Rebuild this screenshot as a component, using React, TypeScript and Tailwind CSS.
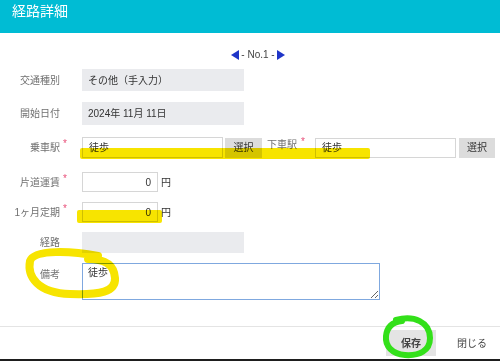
import React from "react";

const Req = () => (
  <span className="absolute -right-[7px] -top-[6px] text-[10px] text-[#e8507a]">*</span>
);

const Label = ({ text, req }: { text: string; req?: boolean }) => (
  <div className="w-[60px] shrink-0 text-right text-[10px] text-[#707070]">
    <span className="relative">
      {text}
      {req && <Req />}
    </span>
  </div>
);

const Marks = () => (
  <svg
    className="pointer-events-none absolute left-0 top-0"
    width="500"
    height="361"
    viewBox="0 0 500 361"
  >
    <g className="mix-blend-multiply">
      <rect x="80" y="148" width="290" height="11" rx="2" fill="#f7e400" />
      <rect x="77" y="210" width="85" height="13" rx="2" fill="#f7e400" />
      <path
        d="M98 256 C72 251 34 249 30 261 C27 277 38 293 70 294 C100 295 116 292 115 278 C114 264 104 259 88 259"
        fill="none"
        stroke="#f7e400"
        strokeWidth="8"
        strokeLinecap="round"
      />
    </g>
    <path
      d="M396 320 C414 315 430 322 430 338 C430 351 419 356 405 355 C392 354 385 346 386 336 C387 327 392 322 402 321"
      fill="none"
      stroke="#33e01a"
      strokeWidth="6"
      strokeLinecap="round"
    />
  </svg>
);

export default function App() {
  return (
    <div className="relative h-[361px] w-[500px] overflow-hidden bg-white font-['Liberation_Sans','Noto_Sans_CJK_JP',sans-serif] text-[#333]">
      <div className="h-[33px] bg-[#00bcd4] pl-3 pt-[2px] text-[14px] leading-[18px] text-white">
        経路詳細
      </div>

      <div className="flex h-[36px] items-start justify-center pl-[16px] pt-[16px] text-[10px] leading-[12px] text-[#444]">
        <svg width="8" height="10" viewBox="0 0 8 10" className="mr-[2px] mt-[1px]">
          <path d="M0 5 L8 0 L8 10 Z" fill="#1f35c8" />
        </svg>
        <span>- No.1 -</span>
        <svg width="8" height="10" viewBox="0 0 8 10" className="ml-[2px] mt-[1px]">
          <path d="M8 5 L0 0 L0 10 Z" fill="#1f35c8" />
        </svg>
      </div>

      <div className="flex h-[22px] items-center">
        <Label text="交通種別" />
        <div className="ml-[22px] flex h-full w-[162px] items-center bg-[#eaebee] pl-[6px] text-[10px]">
          その他（手入力）
        </div>
      </div>

      <div className="mt-[11px] flex h-[23px] items-center">
        <Label text="開始日付" />
        <div className="ml-[22px] flex h-full w-[162px] items-center bg-[#eaebee] pl-[6px] text-[10px]">
          2024年 11月 11日
        </div>
      </div>

      <div className="mt-[12px] flex h-[21px] items-center">
        <Label text="乗車駅" req />
        <div className="ml-[22px] flex h-full w-[141px] items-center border border-[#d6d6d6] pl-[6px] text-[10px]">
          徒歩
        </div>
        <div className="ml-[2px] flex h-[20px] w-[37px] items-center justify-center bg-[#dcdcdc] text-[10px]">
          選択
        </div>
        <div className="ml-[5px] w-[48px] -translate-y-[3px] text-[10px] text-[#707070]">
          <span className="relative">
            下車駅
            <span className="absolute -right-[8px] -top-[5px] text-[10px] text-[#e8507a]">*</span>
          </span>
        </div>
        <div className="flex h-[20px] w-[141px] items-center border border-[#d6d6d6] pl-[6px] text-[10px]">
          徒歩
        </div>
        <div className="ml-[3px] flex h-[20px] w-[36px] items-center justify-center bg-[#dcdcdc] text-[10px]">
          選択
        </div>
      </div>

      <div className="mt-[14px] flex h-[20px] items-center">
        <Label text="片道運賃" req />
        <div className="ml-[22px] flex h-full w-[76px] items-center justify-end border border-[#d6d6d6] pr-[6px] text-[10px]">
          0
        </div>
        <span className="ml-[3px] text-[10px]">円</span>
      </div>

      <div className="mt-[10px] flex h-[20px] items-center">
        <Label text="1ヶ月定期" req />
        <div className="ml-[22px] flex h-full w-[76px] items-center justify-end border border-[#d6d6d6] pr-[6px] text-[10px]">
          0
        </div>
        <span className="ml-[3px] text-[10px]">円</span>
      </div>

      <div className="mt-[10px] flex h-[21px] items-center">
        <Label text="経路" />
        <div className="ml-[22px] h-full w-[162px] bg-[#eaebee]" />
      </div>

      <div className="mt-[10px] flex h-[37px] items-start">
        <div className="pt-[4px]">
          <Label text="備考" />
        </div>
        <textarea
          defaultValue="徒歩"
          className="ml-[22px] h-[37px] w-[298px] border border-[#7fa8df] px-[5px] pt-[2px] text-[10px] leading-[14px] outline-none"
        />
      </div>

      <div className="mt-[26px] h-px bg-[#e4e4e4]" />

      <div className="flex h-[32px] items-center justify-end pr-[13px] text-[10px]">
        <div className="flex h-[26px] w-[50px] items-center justify-center bg-[#e4e4e4] font-bold text-[#444]">
          保存
        </div>
        <div className="ml-[21px] text-[#444]">閉じる</div>
      </div>

      <div className="h-[2px] bg-[#1e1e1e]" />

      <Marks />
    </div>
  );
}
